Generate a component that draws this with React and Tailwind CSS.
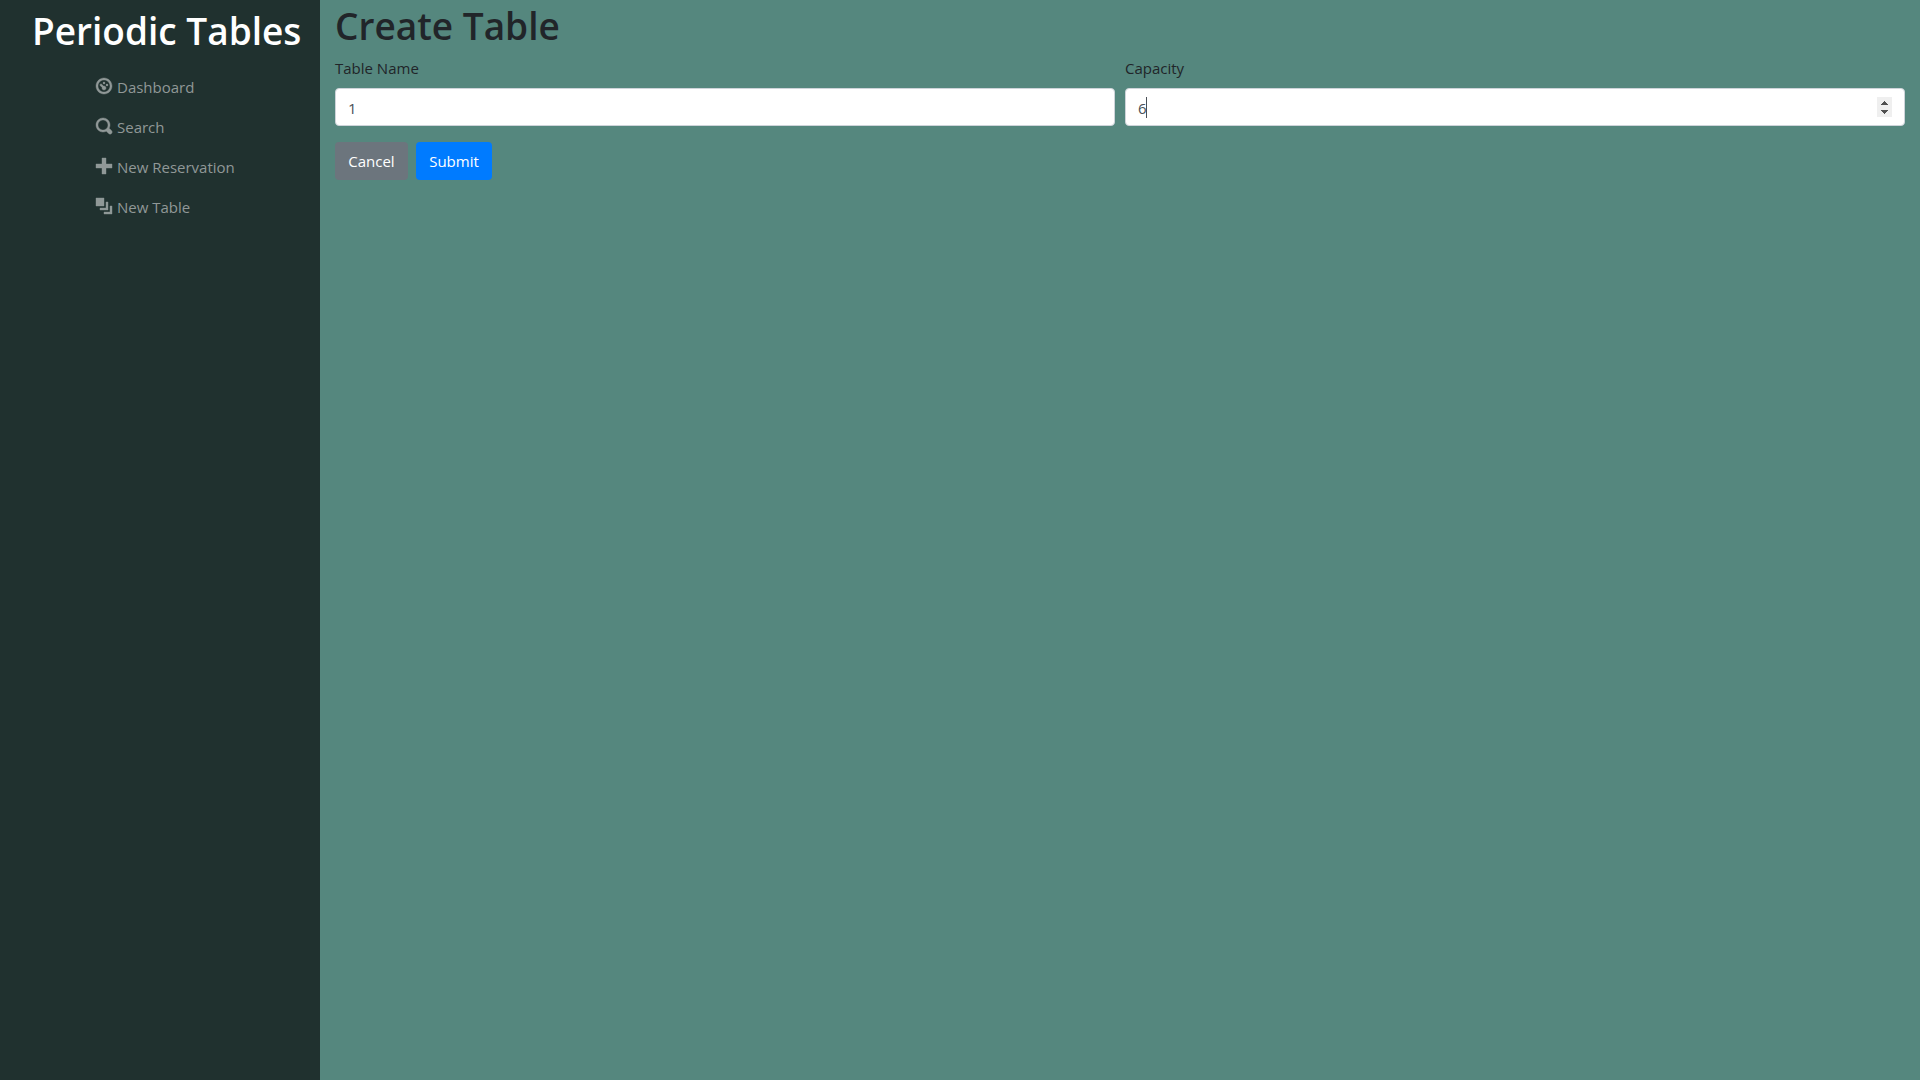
import { useState } from "react";

const icons = {
  dashboard:
    "M4 0c-2.2 0-4 1.8-4 4s1.8 4 4 4 4-1.8 4-4-1.8-4-4-4zm0 1c1.66 0 3 1.34 3 3s-1.34 3-3 3-3-1.34-3-3 1.34-3 3-3zm0 1c-.28 0-.5.22-.5.5s.22.5.5.5.5-.22.5-.5-.22-.5-.5-.5zm-1.66 1a.5.5 0 0 0-.19.84l.91.91c-.02.08-.06.16-.06.25 0 .55.45 1 1 1s1-.45 1-1-.45-1-1-1c-.09 0-.17.04-.25.06l-.91-.91a.5.5 0 0 0-.44-.16.5.5 0 0 0-.06 0zm3.16 0c-.28 0-.5.22-.5.5s.22.5.5.5.5-.22.5-.5-.22-.5-.5-.5z",
  search:
    "M3.5 0c-1.93 0-3.5 1.57-3.5 3.5s1.57 3.5 3.5 3.5c.59 0 1.17-.14 1.66-.41a1 1 0 0 0 .13.13l1 1a1.02 1.02 0 1 0 1.44-1.44l-1-1a1 1 0 0 0-.16-.13c.27-.49.44-1.06.44-1.66 0-1.93-1.55-3.5-3.5-3.5zm0 1c1.39 0 2.5 1.11 2.5 2.5 0 .66-.24 1.27-.66 1.72l-.03.03a1 1 0 0 0-.13.13c-.44.4-1.04.63-1.69.63-1.39 0-2.5-1.11-2.5-2.5s1.11-2.5 2.5-2.5z",
  plus: "M3 0v3h-3v2h3v3h2v-3h3v-2h-3v-3h-2z",
  layers: "M0 0v4h4v-4h-4zm5 2v3h-3v1h4v-4h-1zm2 2v3h-3v1h4v-4h-1z",
};

const links = [
  { label: "Dashboard", icon: "dashboard", href: "#dashboard" },
  { label: "Search", icon: "search", href: "#search" },
  { label: "New Reservation", icon: "plus", href: "#reservations-new" },
  { label: "New Table", icon: "layers", href: "#tables-new" },
];

const inputClass =
  "block h-[38px] w-full rounded border border-[#ced4da] bg-white px-3 pt-[7px] pb-[5px] text-[15px] leading-6 text-[#495057] outline-none";

function Sidebar() {
  return (
    <aside className="w-1/6 shrink-0 bg-[#20312f]">
      <a href="#home" className="block pt-[7px] pl-8 text-[37px] leading-[48px] font-semibold whitespace-nowrap text-white">
        Periodic Tables
      </a>
      <nav className="mt-3 pl-24">
        <ul>
          {links.map((l) => (
            <li key={l.label}>
              <a href={l.href} className="flex gap-[5px] py-2 text-[15px] leading-6 text-[#909897]">
                <svg viewBox="0 0 8 8" className="mt-[3px] size-4 overflow-visible fill-current stroke-current" strokeWidth="0.2" aria-hidden="true">
                  <path d={icons[l.icon]} />
                </svg>
                {l.label}
              </a>
            </li>
          ))}
        </ul>
      </nav>
    </aside>
  );
}

function Spinner({ onStep }) {
  return (
    <div className="absolute top-[9px] right-[13px] flex h-5 w-[15px] flex-col bg-[#efefef] text-[#505050]">
      <button type="button" aria-label="Increase capacity" onClick={() => onStep(1)} className="flex flex-1 items-end justify-center pb-0.5">
        <svg width="7" height="4" viewBox="0 0 7 4" className="fill-current" shapeRendering="crispEdges">
          <path d="M3 0h1v1h1v1h1v1h1v1H0V3h1V2h1V1h1z" />
        </svg>
      </button>
      <button type="button" aria-label="Decrease capacity" onClick={() => onStep(-1)} className="flex flex-1 items-start justify-center pt-[3px]">
        <svg width="7" height="4" viewBox="0 0 7 4" className="fill-current" shapeRendering="crispEdges">
          <path d="M0 0h7v1H6v1H5v1H4v1H3V3H2V2H1V1H0z" />
        </svg>
      </button>
    </div>
  );
}

export default function App() {
  const [capacity, setCapacity] = useState(6);
  return (
    <div className="flex min-h-screen bg-[#55877e] font-['Open_Sans','Noto_Sans',sans-serif] text-[15px] leading-6 text-[#212529]">
      <Sidebar />
      <main className="min-w-0 flex-1 px-[15px]">
        <h1 className="pt-0.5 pb-1.5 text-[37px] leading-[48px] font-semibold">Create Table</h1>
        <form onSubmit={(e) => e.preventDefault()}>
          <div className="mb-4 grid grid-cols-2 gap-2.5">
            <div>
              <label htmlFor="table_name" className="mb-2 block">Table Name</label>
              <input id="table_name" type="text" defaultValue="1" className={inputClass} />
            </div>
            <div>
              <label htmlFor="capacity" className="mb-2 block">Capacity</label>
              <div className="relative">
                <input
                  id="capacity"
                  type="number"
                  value={capacity}
                  onChange={(e) => setCapacity(e.target.value)}
                  className={`${inputClass} [appearance:textfield]`}
                />
                <span className="absolute top-[9px] left-[21px] h-[21px] w-px bg-[#495057]" />
                <Spinner onStep={(n) => setCapacity(Number(capacity) + n)} />
              </div>
            </div>
          </div>
          <div className="flex gap-2">
            <button type="button" className="h-[38px] min-w-[73px] rounded bg-[#6c757d] px-3 text-white">Cancel</button>
            <button type="submit" className="h-[38px] min-w-[76px] rounded bg-[#007bff] px-3 text-white">Submit</button>
          </div>
        </form>
      </main>
    </div>
  );
}
